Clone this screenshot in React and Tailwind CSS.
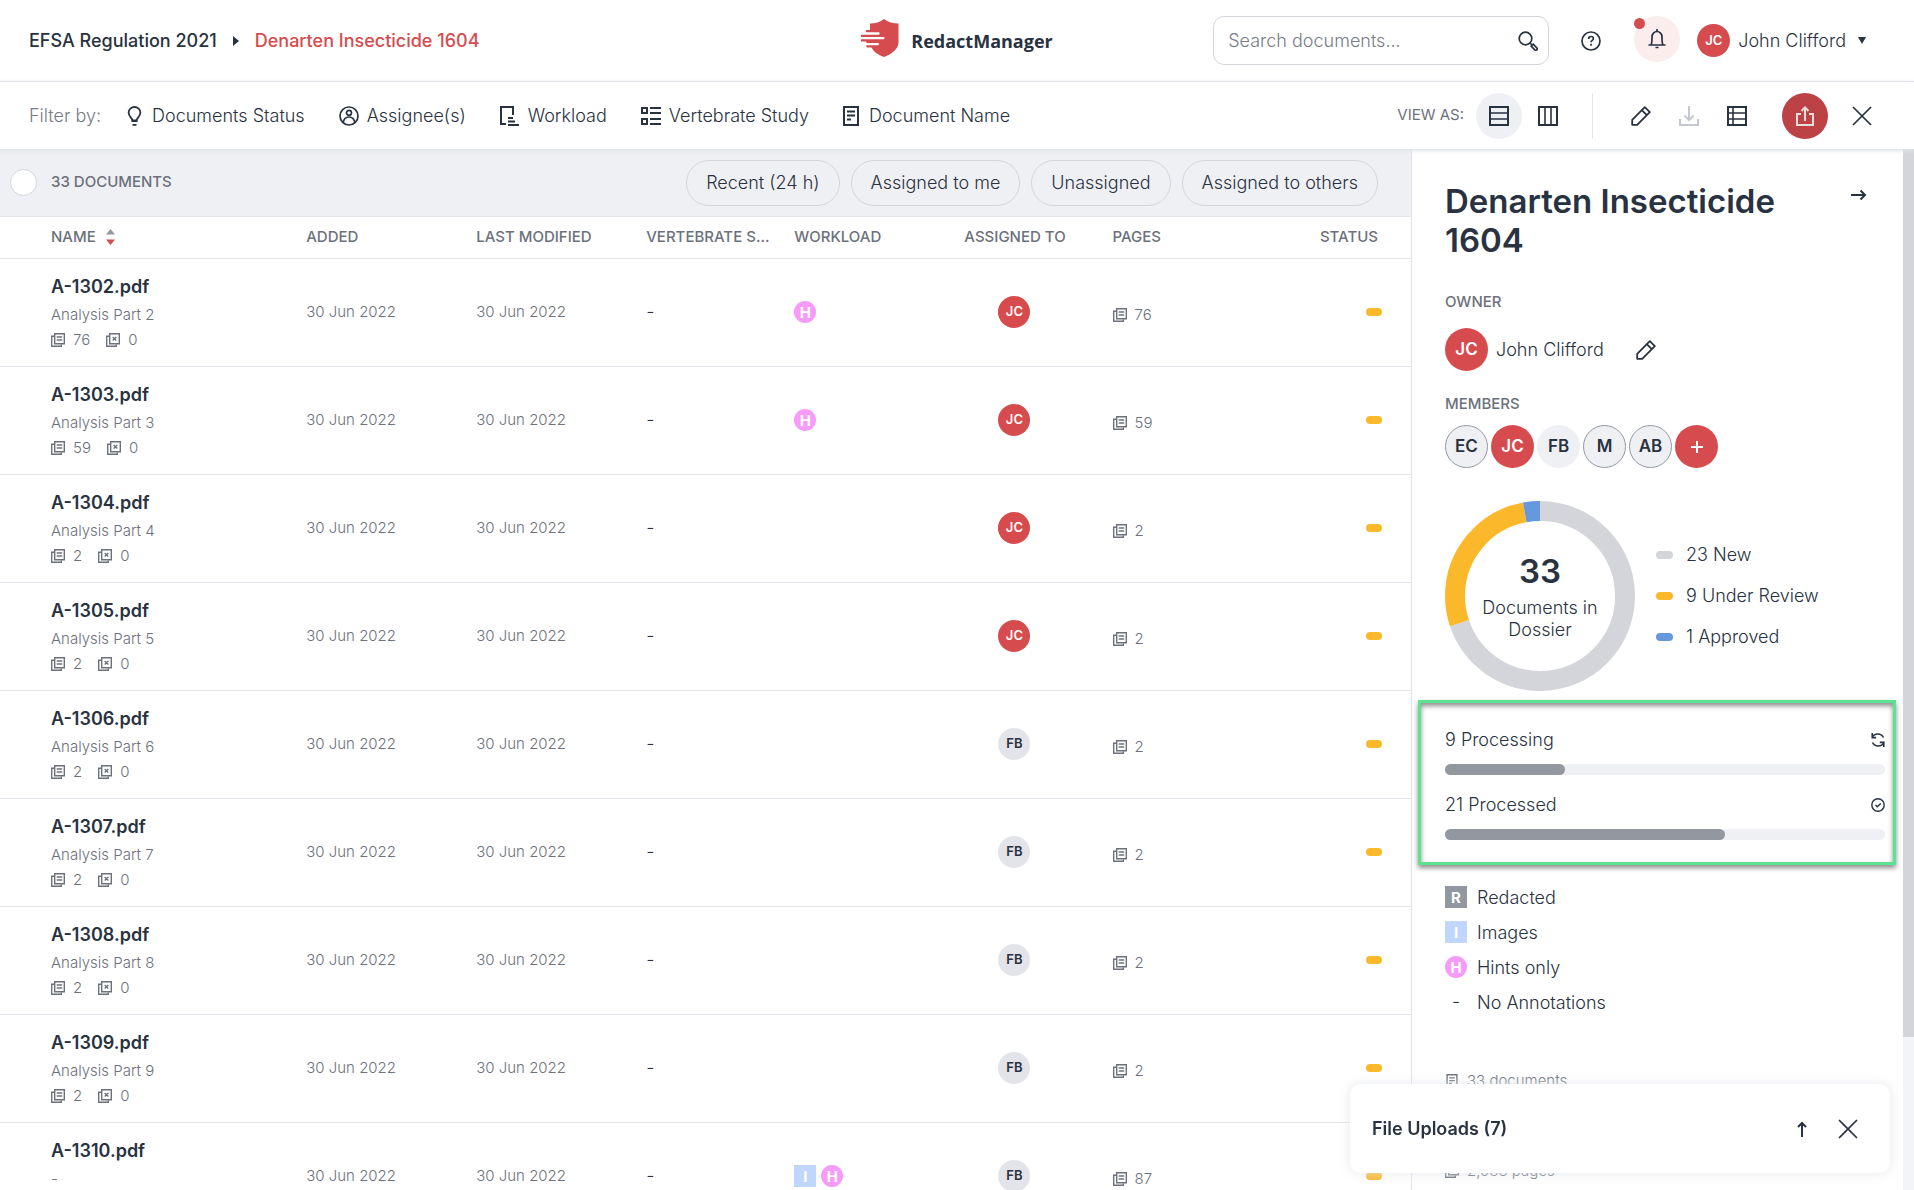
const NAVY = "text-[#283241]";

function Svg({ w = 20, h = 20, vb = "0 0 20 20", sw = 2, className = "", children }) {
  return (
    <svg width={w} height={h} viewBox={vb} fill="none" stroke="currentColor" strokeWidth={sw} className={"shrink-0 " + className} aria-hidden="true">
      {children}
    </svg>
  );
}

const Bulb = () => (
  <Svg w={15} vb="0 0 14 20" sw={1.8}>
    <path d="M5 14.5c0-2-3.9-4-3.9-8A5.9 5.6 0 0 1 7 1a5.9 5.6 0 0 1 5.900 5.500c0 4-3.900 6-3.900 8z" />
    <path d="M4 15.200h6M5 18.900h4" />
  </Svg>
);
const Person = () => (
  <Svg sw={1.7}>
    <circle cx="10" cy="10" r="9" />
    <circle cx="10" cy="6.800" r="2.500" />
    <path d="M4.200 16.500c.6-3.500 2.600-5.500 5.800-5.500s5.200 2 5.800 5.500" />
  </Svg>
);
const WorkloadIcon = () => (
  <Svg>
    <path d="M6 18H1V1h12v8" />
    <path d="M8 12h5M8 15.500h7M8 19h11" />
  </Svg>
);
const StudyIcon = () => (
  <Svg>
    <path d="M1 1.900h5v5H1zM1 12.900h5v5H1z" />
    <path d="M9 2h11M9 7h11M9 13h11M9 18h11" />
  </Svg>
);
const DocIcon = ({ w = 16, h = 20, className }) => (
  <Svg w={w} h={h} vb="0 0 16 20" className={className}>
    <path d="M1 1h14v18H1z" />
    <path d="M4 5.500h8M4 9.500h8M4 13.500h4" />
  </Svg>
);
const Pages = ({ x }) => (
  <Svg w={14} h={14} vb="0 0 14 14" sw={1.4}>
    <path d="M3.700.700h9.600v10H3.700z" />
    <path d="M3 3.300H.700v10h9.600V11.500" />
    {x ? <path d="M6.700 3.900l3.600 3.600M10.300 3.900L6.700 7.500" /> : <path d="M5.700 4h5.500M5.700 7h5.500" />}
  </Svg>
);
const Pencil = () => (
  <Svg sw={1.8}>
    <path d="M1.200 18.800v-5L13.800 1.200l5 5L6.200 18.800zM10.800 4.200l5 5" strokeLinejoin="round" />
  </Svg>
);
const Close = () => (
  <Svg sw={1.7}>
    <path d="M1 1l18 18M19 1L1 19" />
  </Svg>
);
const Logo = () => (
  <svg width="38" height="38" viewBox="0 0 38 38" className="shrink-0" aria-hidden="true">
    <path fill="#d64b4e" d="M23 0c4 3.300 9 4.400 14.500 4.500v18.500c0 7-6.500 12-14.500 15-5.500-2-10.500-5-12.500-9.500H6.300a1 1 0 0 1 0-2.300H17a1 1 0 0 0 0-2.200H6.300a1 1 0 0 1-1-1.500H.900a1 1 0 0 1 0-2.300H22.500a1 1 0 0 0 0-2.200H.900a1 1 0 0 1 0-2.300H17.500a1 1 0 0 0 0-2.400H5.800a1 1 0 0 1 0-2.300H9V4.500C14.500 4.400 19 3.300 23 0z" />
  </svg>
);

function Avatar({ name, size = "w-8 h-8 text-[13px]", tone = "bg-[#d64b4e] text-white" }) {
  return <span className={"flex shrink-0 items-center justify-center rounded-full font-semibold " + size + " " + tone}>{name}</span>;
}

function Tag({ kind }) {
  const tone = { R: "bg-[#9398a0]", I: "bg-[#c1d6ff]", H: "rounded-full bg-[#f69bf9]" }[kind];
  return <span className={"flex size-[22px] items-center justify-center text-[15px] leading-none font-bold text-white " + tone}>{kind}</span>;
}

const docs = [
  ["A-1302.pdf", "Analysis Part 2", 76, ["H"], "JC"],
  ["A-1303.pdf", "Analysis Part 3", 59, ["H"], "JC"],
  ["A-1304.pdf", "Analysis Part 4", 2, [], "JC"],
  ["A-1305.pdf", "Analysis Part 5", 2, [], "JC"],
  ["A-1306.pdf", "Analysis Part 6", 2, [], "FB"],
  ["A-1307.pdf", "Analysis Part 7", 2, [], "FB"],
  ["A-1308.pdf", "Analysis Part 8", 2, [], "FB"],
  ["A-1309.pdf", "Analysis Part 9", 2, [], "FB"],
  ["A-1310.pdf", "-", 87, ["I", "H"], "FB"],
];

const filters = [
  ["Documents Status", Bulb, "gap-2.5"],
  ["Assignee(s)", Person, "gap-2"],
  ["Workload", WorkloadIcon, "gap-2"],
  ["Vertebrate Study", StudyIcon, "gap-2"],
  ["Document Name", DocIcon, "gap-2.5"],
];

function TopBar() {
  return (
    <header className="grid h-[82px] shrink-0 grid-cols-[1fr_auto_1fr] items-center border-b border-[#e2e4e9] px-[29px]">
      <nav aria-label="Breadcrumb" className="flex items-center gap-4 text-lg font-medium">
        <a href="#regulation">EFSA Regulation 2021</a>
        <svg width="6" height="10" viewBox="0 0 6 10" aria-hidden="true"><path d="M0 0l6 5-6 5z" fill="currentColor" /></svg>
        <a href="#dossier" className="text-[#d64b4e]">Denarten Insecticide 1604</a>
      </nav>
      <a href="#home" className="flex items-start gap-3 pb-1.5">
        <Logo />
        <span className="pt-2 font-['Open_Sans',sans-serif] text-lg leading-7 font-bold">RedactManager</span>
      </a>
      <div className="flex items-center justify-end pr-[19px]">
        <div className="flex h-[49px] w-[336px] items-center rounded-[11px] border border-[#d3d5da] px-3.5">
          <input aria-label="Search documents" placeholder="Search documents..." className="min-w-0 flex-1 text-lg font-light outline-none placeholder:text-[#767b85]" />
          <button aria-label="Search" className="-mr-1">
            <Svg sw={1.7}><circle cx="7.500" cy="7.500" r="6.300" /><path d="M12 12l1.800 1.800M13.200 15.200l3.600 3.600a1.300 1.300 0 0 0 2-2l-3.600-3.600z" /></Svg>
          </button>
        </div>
        <button aria-label="Help" className="ml-8">
          <Svg sw={1.7}><circle cx="10" cy="10" r="9" /><path d="M7.600 8c0-1.500 1-2.500 2.400-2.500s2.400.900 2.400 2.200c0 1.600-2.400 1.800-2.400 3.500M10 12.700v2" /></Svg>
        </button>
        <button aria-label="Notifications" className="relative mr-[17px] mb-1 ml-[33px] flex size-[46px] items-center justify-center rounded-full bg-[#fbeced]">
          <span className="absolute top-0.5 left-0 size-[11px] rounded-full bg-[#d64b4e]" />
          <Svg sw={1.7}><path d="M1.500 16h17M4 16c1-1.500 1-3 1-8a5 5.500 0 0 1 10 0c0 5 0 6.500 1 8" /><path d="M10 0v3M8.500 18.500h3" /></Svg>
        </button>
        <button className="flex items-center gap-2 text-lg font-light">
          <Avatar name="JC" size="size-[33px] text-[13px]" />
          John Clifford
          <svg width="8" height="7" viewBox="0 0 8 7" className="ml-1" aria-hidden="true"><path d="M0 0h8L4 7z" fill="currentColor" /></svg>
        </button>
      </div>
    </header>
  );
}

function ToolBar() {
  return (
    <div className="z-10 flex h-[67px] shrink-0 items-center justify-between pr-[42px] pl-[29px] shadow-[0_1px_4px_1px_#dfe2e7]">
      <div className="flex items-center text-lg font-light">
        <span className="mr-[26px] text-[#767b85]">Filter by:</span>
        <div className="flex gap-[34px]">
          {filters.map(([label, Icon, gap]) => (
            <button key={label} className={"flex items-center " + gap}><Icon />{label}</button>
          ))}
        </div>
      </div>
      <div className="flex items-center">
        <span className="mr-3 text-[15px] text-[#6c717b]">VIEW AS:</span>
        <button aria-label="List view" className="flex size-[46px] items-center justify-center rounded-full bg-[#eff0f4]">
          <Svg><path d="M1 1h18v18H1z" /><path d="M1 7h18M1 13h18" strokeWidth="1.600" /></Svg>
        </button>
        <button aria-label="Column view" className="ml-4"><Svg><path d="M1 1h18v18H1z" /><path d="M7 1v18M13 1v18" strokeWidth="1.600" /></Svg></button>
        <span className="mr-[38px] ml-[34px] h-[46px] w-px bg-[#e2e4e9]" />
        <div className="flex items-center gap-7">
          <button aria-label="Edit"><Pencil /></button>
          <button aria-label="Download" disabled className="text-[#c5c8cd]"><Svg><path d="M10 0v14M5.500 9.500L10 14l4.500-4.500M1 13v6h18v-6" /></Svg></button>
          <button aria-label="Report"><Svg><path d="M1 1h18v18H1z" /><path d="M1 7h18M1 13h18M6 1v18" strokeWidth="1.600" /></Svg></button>
        </div>
        <button aria-label="Share" className="mr-6 ml-[35px] flex size-[46px] items-center justify-center rounded-full bg-[#bc4245] text-[#e8dcdd]">
          <Svg><path d="M6 8H2v11h16V8h-4M10 15V2M6.500 5L10 1.500 13.500 5" /></Svg>
        </button>
        <button aria-label="Close"><Close /></button>
      </div>
    </div>
  );
}

function DocumentList() {
  return (
    <main className="min-w-0 flex-1 overflow-hidden border-r border-[#e2e4e9]">
      <div className="flex h-[68px] items-center border-b border-[#e2e4e9] bg-[#eff0f4] pr-[33px] pl-2.5">
        <input type="checkbox" id="all" className="size-[27px] appearance-none rounded-full border border-[#d3d5da] bg-white" />
        <label htmlFor="all" className="ml-3.5 flex-1 text-[15px] font-medium text-[#6c717b]">33 DOCUMENTS</label>
        <div className="flex gap-[11px]">
          {["Recent (24 h)", "Assigned to me", "Unassigned", "Assigned to others"].map((t) => (
            <button key={t} className="h-[46px] rounded-full border border-[#d3d5da] px-[19px] text-lg font-light">{t}</button>
          ))}
        </div>
      </div>
      <table className="w-full table-fixed text-left">
        <thead className="text-[15px] text-[#6c717b]">
          <tr className="h-[41px] border-b border-[#e2e4e9] [&>th]:p-0 [&>th]:font-medium">
            <th className="w-[21.700%] !pl-[51px]">
              <button className="flex items-center gap-2.5">
                NAME
                <svg width="9" height="16" viewBox="0 0 9 16" aria-hidden="true"><path d="M0 5.500L4.500 0 9 5.500z" fill="#9398a0" /><path d="M0 10.500h9L4.500 16z" fill="#d64b4e" /></svg>
              </button>
            </th>
            <th className="w-[12.050%]">ADDED</th>
            <th className="w-[12.050%]">LAST MODIFIED</th>
            <th className="w-[10.500%] whitespace-nowrap">VERTEBRATE S...</th>
            <th className="w-[12.050%]">WORKLOAD</th>
            <th className="w-[10.500%] !pr-12 text-center whitespace-nowrap">ASSIGNED TO</th>
            <th>PAGES</th>
            <th className="!pr-[33px] text-right">STATUS</th>
          </tr>
        </thead>
        <tbody className="text-[15px] font-light text-[#6c717b]">
          {docs.map(([name, desc, pages, tags, who]) => (
            <tr key={name} className="h-[108px] border-b border-[#e2e4e9] [&>td]:p-0">
              <td className="!pl-[51px]">
                <div className="text-lg leading-7 font-semibold text-[#283241]">{name}</div>
                <div className="leading-7">{desc}</div>
                <div className="flex h-[22px] items-center gap-4">
                  <span className="flex items-center gap-2"><Pages />{pages}</span>
                  <span className="flex items-center gap-2"><Pages x />0</span>
                </div>
              </td>
              <td>30 Jun 2022</td>
              <td>30 Jun 2022</td>
              <td className="text-lg text-[#283241]">-</td>
              <td><div className="flex gap-[5px]">{tags.map((t) => <Tag key={t} kind={t} />)}</div></td>
              <td className="!pr-12">
                <div className="flex justify-center">
                  <Avatar name={who} tone={who === "JC" ? "bg-[#d64b4e] text-white" : "bg-[#e2e4e9] text-[#283241]"} />
                </div>
              </td>
              <td><span className="flex items-center gap-2 pt-1.5"><Pages />{pages}</span></td>
              <td className="!pr-[29px]"><div className="ml-auto h-2 w-4 rounded-full bg-[#fab82a]" /></td>
            </tr>
          ))}
        </tbody>
      </table>
    </main>
  );
}

const C = 2 * Math.PI * 85;
const slices = [["23 New", 23, 0, "#d3d5da", "bg-[#d3d5da]"], ["9 Under Review", 9, 23, "#fab82a", "bg-[#fab82a]"], ["1 Approved", 1, 32, "#6698de", "bg-[#6698de]"]];

function Progress({ label, value, icon }) {
  return (
    <div>
      <div className="flex h-6 items-center justify-between"><span>{label}</span>{icon}</div>
      <div className="mt-3 h-[11px] rounded-full bg-[#eff0f4]">
        <div className="h-full rounded-full bg-[#9398a0]" style={{ width: (value / 33) * 100 + "%" }} />
      </div>
    </div>
  );
}

function Details() {
  const ring = "border border-[#9398a0] bg-[#eff0f4]";
  const members = [["EC", ring], ["JC", "bg-[#d64b4e] text-white"], ["FB", "bg-[#eff0f4]"], ["M", ring], ["AB", ring]];
  return (
    <aside className="flex w-[502px] shrink-0 overflow-hidden">
      <div className="min-w-0 flex-1 pt-[33px] pl-[33px] text-lg font-light">
        <div className="flex items-start justify-between pr-9">
          <h1 className="w-[360px] text-[33px] leading-[39px] font-semibold">Denarten Insecticide 1604</h1>
          <button aria-label="Collapse" className="mt-[7px]"><Svg w={16} h={12} vb="0 0 16 12"><path d="M0 6h14M9.500 1.500L14 6l-4.500 4.500" /></Svg></button>
        </div>
        <h2 className="mt-[30px] text-[15px] leading-6 font-medium text-[#6c717b]">OWNER</h2>
        <div className="mt-3.5 flex items-center gap-2">
          <Avatar name="JC" size="size-[43px] text-[17px]" />
          John Clifford
          <button aria-label="Edit owner" className="ml-6"><Pencil /></button>
        </div>
        <h2 className="mt-[21px] text-[15px] leading-6 font-medium text-[#6c717b]">MEMBERS</h2>
        <div className="mt-[9px] flex gap-[3px]">
          {members.map(([n, tone]) => <Avatar key={n} name={n} size="size-[43px] text-[17px]" tone={tone} />)}
          <button aria-label="Add member" className="flex size-[43px] items-center justify-center rounded-full bg-[#d64b4e] text-white">
            <Svg w={12} h={12} vb="0 0 12 12"><path d="M6 0v12M0 6h12" /></Svg>
          </button>
        </div>
        <div className="mt-[33px] flex items-center gap-[21px]">
          <div className="grid size-[190px] shrink-0 place-items-center *:col-start-1 *:row-start-1">
            <svg width="190" height="190" viewBox="0 0 190 190" aria-hidden="true">
              <g transform="rotate(-90 95 95)" fill="none" strokeWidth="20">
                {slices.map(([l, n, start, color]) => (
                  <circle key={l} cx="95" cy="95" r="85" stroke={color} strokeDasharray={(n / 33) * C + " " + C} strokeDashoffset={(-start / 33) * C} />
                ))}
              </g>
            </svg>
            <div className="w-[130px] text-center leading-[22px]">
              <div className="mb-1.5 text-[33px] leading-[39px] font-semibold">33</div>
              Documents in Dossier
            </div>
          </div>
          <ul className="flex flex-col gap-[17px]">
            {slices.map(([l, , , , bg]) => (
              <li key={l} className="flex h-6 items-center gap-[13px]"><span className={"h-2 w-[17px] rounded-full " + bg} /><span>{l}</span></li>
            ))}
          </ul>
        </div>
        <section className="mt-[9px] mr-[7px] -ml-[27px] flex flex-col gap-[18px] border-[3px] border-[#5ce391] pt-[25px] pr-2 pb-[22px] pl-6 shadow-[0_3px_5px_rgba(0,0,0,0.45),inset_0_3px_5px_rgba(0,0,0,0.45)]">
          <Progress label="9 Processing" value={9} icon={<Svg w={14} h={14} vb="0 0 14 14" sw={1.600}><path d="M1 4.500A6.500 6.500 0 0 1 12.500 4.500M1.200 0v4.600h4M13 9.500A6.500 6.500 0 0 1 1.500 9.500M12.800 14V9.400h-4" /></Svg>} />
          <Progress label="21 Processed" value={21} icon={<Svg w={14} h={14} vb="0 0 14 14" sw={1.400}><circle cx="7" cy="7" r="6.200" /><path d="M4.500 7l1.800 1.800L9.700 5.500" /></Svg>} />
        </section>
        <ul className="mt-5 flex flex-col gap-[11px]">
          {[["R", "Redacted"], ["I", "Images"], ["H", "Hints only"], ["-", "No Annotations"]].map(([k, l]) => (
            <li key={l} className="flex h-6 items-center gap-2.5">
              {k === "-" ? <span className="w-[22px] text-center">-</span> : <Tag kind={k} />}<span className="pt-0.5">{l}</span>
            </li>
          ))}
        </ul>
        <div className="mt-[55px] flex flex-col gap-[66px] text-[15px] leading-6 text-[#6c717b]">
          <div className="flex items-center gap-2"><DocIcon w={14} h={14} />33 documents</div>
          <div className="flex items-center gap-2"><Pages />2,083 pages</div>
        </div>
      </div>
      <div className="w-[11px] bg-[#f3f4f7]"><div className="h-[888px] bg-[#d3d5da]" /></div>
    </aside>
  );
}

export default function App() {
  return (
    <div className={"flex h-screen flex-col overflow-hidden bg-white font-['Inter',sans-serif] " + NAVY}>
      <TopBar />
      <ToolBar />
      <div className="flex min-h-0 flex-1">
        <DocumentList />
        <Details />
      </div>
      <div className="fixed right-6 bottom-[17px] z-20 flex h-[89px] w-[540px] items-center rounded-[11px] bg-white pr-8 pl-[22px] shadow-[0_0_12px_rgba(226,228,233,0.9)]">
        <span className="flex-1 text-lg font-semibold">File Uploads (7)</span>
        <button aria-label="Expand uploads"><Svg w={10} h={16} vb="0 0 10 16"><path d="M5 16V2M1 6l4-4 4 4" /></Svg></button>
        <button aria-label="Close uploads" className="ml-[31px]"><Close /></button>
      </div>
    </div>
  );
}
